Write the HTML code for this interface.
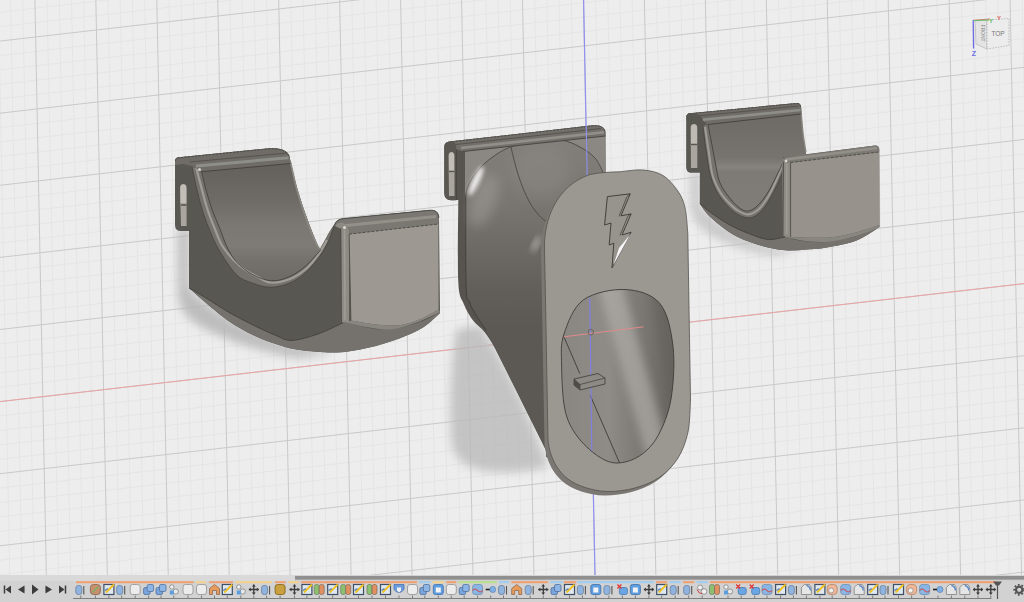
<!DOCTYPE html>
<html><head><meta charset="utf-8"><style>
html,body{margin:0;padding:0;background:#ededed;overflow:hidden;width:1024px;height:602px}
svg{display:block}
</style></head><body>
<svg width="1024" height="602" viewBox="0 0 1024 602">
<rect width="1024" height="602" fill="#ededed"/>
<path d="M-13.86 0L-1.88 602 M-1.67 0L10.31 602 M10.52 0L22.50 602 M22.71 0L34.69 602 M47.09 0L59.07 602 M59.28 0L71.26 602 M71.47 0L83.45 602 M83.66 0L95.64 602 M108.04 0L120.02 602 M120.23 0L132.21 602 M132.42 0L144.40 602 M144.61 0L156.59 602 M168.99 0L180.97 602 M181.18 0L193.16 602 M193.37 0L205.35 602 M205.56 0L217.54 602 M229.94 0L241.92 602 M242.13 0L254.11 602 M254.32 0L266.30 602 M266.51 0L278.49 602 M290.89 0L302.87 602 M303.08 0L315.06 602 M315.27 0L327.25 602 M327.46 0L339.44 602 M351.84 0L363.82 602 M364.03 0L376.01 602 M376.22 0L388.20 602 M388.41 0L400.39 602 M412.79 0L424.77 602 M424.98 0L436.96 602 M437.17 0L449.15 602 M449.36 0L461.34 602 M473.74 0L485.72 602 M485.93 0L497.91 602 M498.12 0L510.10 602 M510.31 0L522.29 602 M534.69 0L546.67 602 M546.88 0L558.86 602 M559.07 0L571.05 602 M571.26 0L583.24 602 M595.64 0L607.62 602 M607.83 0L619.81 602 M620.02 0L632.00 602 M632.21 0L644.19 602 M656.59 0L668.57 602 M668.78 0L680.76 602 M680.97 0L692.95 602 M693.16 0L705.14 602 M717.54 0L729.52 602 M729.73 0L741.71 602 M741.92 0L753.90 602 M754.11 0L766.09 602 M778.49 0L790.47 602 M790.68 0L802.66 602 M802.87 0L814.85 602 M815.06 0L827.04 602 M839.44 0L851.42 602 M851.63 0L863.61 602 M863.82 0L875.80 602 M876.01 0L887.99 602 M900.39 0L912.37 602 M912.58 0L924.56 602 M924.77 0L936.75 602 M936.96 0L948.94 602 M961.34 0L973.32 602 M973.53 0L985.51 602 M985.72 0L997.70 602 M997.91 0L1009.89 602 M1022.29 0L1034.27 602 M0 718.84L1024 600.88 M0 704.42L1024 586.46 M0 675.58L1024 557.62 M0 661.16L1024 543.20 M0 646.74L1024 528.78 M0 632.32L1024 514.36 M0 603.48L1024 485.52 M0 589.06L1024 471.10 M0 574.64L1024 456.68 M0 560.22L1024 442.26 M0 531.38L1024 413.42 M0 516.96L1024 399.00 M0 502.54L1024 384.58 M0 488.12L1024 370.16 M0 459.28L1024 341.32 M0 444.86L1024 326.90 M0 430.44L1024 312.48 M0 416.02L1024 298.06 M0 387.18L1024 269.22 M0 372.76L1024 254.80 M0 358.34L1024 240.38 M0 343.92L1024 225.96 M0 315.08L1024 197.12 M0 300.66L1024 182.70 M0 286.24L1024 168.28 M0 271.82L1024 153.86 M0 242.98L1024 125.02 M0 228.56L1024 110.60 M0 214.14L1024 96.18 M0 199.72L1024 81.76 M0 170.88L1024 52.92 M0 156.46L1024 38.50 M0 142.04L1024 24.08 M0 127.62L1024 9.66 M0 98.78L1024 -19.18 M0 84.36L1024 -33.60 M0 69.94L1024 -48.02 M0 55.52L1024 -62.44 M0 26.68L1024 -91.28 M0 12.26L1024 -105.70 M0 -2.16L1024 -120.12" stroke="#e5e5e5" stroke-width="1" fill="none"/>
<path d="M34.90 0L46.88 602 M95.85 0L107.83 602 M156.80 0L168.78 602 M217.75 0L229.73 602 M278.70 0L290.68 602 M339.65 0L351.63 602 M400.60 0L412.58 602 M461.55 0L473.53 602 M522.50 0L534.48 602 M583.45 0L595.43 602 M644.40 0L656.38 602 M705.35 0L717.33 602 M766.30 0L778.28 602 M827.25 0L839.23 602 M888.20 0L900.18 602 M949.15 0L961.13 602 M1010.10 0L1022.08 602 M0 690.00L1024 572.04 M0 617.90L1024 499.94 M0 545.80L1024 427.84 M0 473.70L1024 355.74 M0 401.60L1024 283.64 M0 329.50L1024 211.54 M0 257.40L1024 139.44 M0 185.30L1024 67.34 M0 113.20L1024 -4.76 M0 41.10L1024 -76.86" stroke="#c9c9c9" stroke-width="1" fill="none"/>
<path d="M0 401.6L1024 283.6" stroke="#eaa3a3" stroke-width="1" fill="none"/>
<path d="M583.6 0L595 575" stroke="#8f8ff0" stroke-width="1.2" fill="none"/>
<defs>
<filter id="blur5" x="-50%" y="-50%" width="200%" height="200%"><feGaussianBlur stdDeviation="5"/></filter>
<filter id="blur6" x="-50%" y="-50%" width="200%" height="200%"><feGaussianBlur stdDeviation="6"/></filter>
<filter id="blur8" x="-50%" y="-50%" width="200%" height="200%"><feGaussianBlur stdDeviation="8"/></filter>
<filter id="blur2" x="-50%" y="-50%" width="200%" height="200%"><feGaussianBlur stdDeviation="2"/></filter>
<filter id="blur3" x="-50%" y="-50%" width="200%" height="200%"><feGaussianBlur stdDeviation="3"/></filter>
<filter id="blur4" x="-50%" y="-50%" width="200%" height="200%"><feGaussianBlur stdDeviation="4"/></filter>
<linearGradient id="Mbody" x1="0" y1="140" x2="0" y2="470" gradientUnits="userSpaceOnUse">
<stop offset="0" stop-color="#827f7a"/><stop offset="0.18" stop-color="#7a7772"/><stop offset="0.33" stop-color="#6d6a65"/><stop offset="0.45" stop-color="#625f5a"/><stop offset="0.57" stop-color="#5c5954"/><stop offset="1" stop-color="#5c5954"/>
</linearGradient>
<linearGradient id="Mbowl" x1="470" y1="170" x2="560" y2="260" gradientUnits="userSpaceOnUse">
<stop offset="0" stop-color="#8a8782"/><stop offset="0.5" stop-color="#7a7772"/><stop offset="1" stop-color="#6e6b66"/>
</linearGradient>
<linearGradient id="Mhole" x1="565" y1="300" x2="672" y2="300" gradientUnits="userSpaceOnUse">
<stop offset="0" stop-color="#8a8783"/><stop offset="0.4" stop-color="#8f8c87"/><stop offset="0.7" stop-color="#7c7975"/><stop offset="1" stop-color="#6b6864"/>
</linearGradient>
<linearGradient id="Rinner" x1="0" y1="122" x2="0" y2="212" gradientUnits="userSpaceOnUse">
<stop offset="0" stop-color="#6f6c67"/><stop offset="0.4" stop-color="#777470"/><stop offset="0.5" stop-color="#86837e"/><stop offset="0.56" stop-color="#7d7a75"/><stop offset="1" stop-color="#817e79"/>
</linearGradient>
<linearGradient id="Linner" x1="0" y1="165" x2="0" y2="285" gradientUnits="userSpaceOnUse">
<stop offset="0" stop-color="#64615c"/><stop offset="0.29" stop-color="#6e6b66"/><stop offset="0.5" stop-color="#7b7873"/><stop offset="0.67" stop-color="#7e7b76"/><stop offset="0.79" stop-color="#75726d"/><stop offset="1" stop-color="#6c6964"/>
</linearGradient>
</defs>
<g id="L">
<path d="M178 228 L189 228 L189 288 C200 300 230 322 276 340 C300 348 320 350 337 352 L300 358 C260 352 225 340 200 326 C186 318 179 308 178 295 Z" fill="#b5b5b5" filter="url(#blur5)" opacity="0.85"/>
<path d="M175 225 L175 161 Q175 157.5 179 157.3 L267 148.5 C280 147.5 287 150 289.5 156 C289.8 157.2 289.6 157.3 291 163 C292.4 168.7 295 180.8 297.7 190 C300.4 199.2 303.9 209.5 307 218 C310.1 226.5 313.8 235.8 316 241 C318.2 246.2 319.3 247.7 320 249 C320.8 247.5 323.3 243 325 240 C326.7 237 328.5 233.5 330 231 C331.5 228.5 333.3 226 334 225 C336 220.5 339 218.6 345 218.3 L430 210.1 C435 209.7 439 212 439 218 L440 313 C437.2 315.4 429.8 323.3 423 327.5 C416.2 331.7 408.6 335 399.4 338.4 C390.2 341.8 378.4 345.4 368 347.8 C357.6 350.2 348.3 352.1 337 352.5 C325.7 352.9 310.2 351.4 300 350 C289.8 348.6 283.8 346.5 276 344 C268.2 341.5 260.7 338.7 253 335 C245.3 331.3 237.8 327.3 230 322 C222.2 316.7 212.8 308.7 206 303 C199.2 297.3 191.8 290.5 189 288 L189 231 L181 231 Q175 231 175 225 Z" fill="#595752"/>
<path d="M189 288 C191.8 289.7 199.2 293.8 206 298 C212.8 302.2 222.2 308.5 230 313 C237.8 317.5 245.3 321.2 253 325 C260.7 328.8 269.5 332.9 276 335.5 C282.5 338.1 285 340.8 292 340.5 C299 340.2 309.5 336.9 318 334 C326.5 331.1 338.8 324.7 343 322.8 C343.5 322.8 339.2 321.6 346 322.8 C352.8 324 371.5 329.9 383.8 329.8 C396.1 329.7 410.6 325 420 322 C429.4 319 436.7 313.7 440 312 L440 313 C437.2 315.4 429.8 323.3 423 327.5 C416.2 331.7 408.6 335 399.4 338.4 C390.2 341.8 378.4 345.4 368 347.8 C357.6 350.2 348.3 352.1 337 352.5 C325.7 352.9 310.2 351.4 300 350 C289.8 348.6 283.8 346.5 276 344 C268.2 341.5 260.7 338.7 253 335 C245.3 331.3 237.8 327.3 230 322 C222.2 316.7 212.8 308.7 206 303 C199.2 297.3 191.8 290.5 189 288 Z" fill="#75726d"/>
<path d="M189 288 C191.8 289.7 199.2 293.8 206 298 C212.8 302.2 222.2 308.5 230 313 C237.8 317.5 245.3 321.2 253 325 C260.7 328.8 269.5 332.9 276 335.5 C282.5 338.1 285 340.8 292 340.5 C299 340.2 309.5 336.9 318 334 C326.5 331.1 338.8 324.7 343 322.8" fill="none" stroke="#3f3d3a" stroke-width="0.8"/>
<path d="M199 168 L290 160 C291.3 165 294.9 180.3 297.7 190 C300.5 199.7 303.9 209.5 307 218 C310.1 226.5 313.8 235.7 316 241 C318.2 246.3 319.3 248.5 320 250 L321 249.7 C318.5 252.4 311.1 261.3 305.9 265.8 C300.7 270.3 295.5 274 289.8 276.5 C284.1 279 277.9 281.2 271.6 280.8 C265.3 280.4 258.1 277.6 252.2 274.4 C246.3 271.2 240.3 266.1 236.1 261.5 C231.9 256.9 229.7 252.5 226.9 246.8 C224.1 241.1 221.9 233.6 219.4 227.4 C216.9 221.2 214.2 215.6 212 209.4 C209.8 203.2 207.8 196.2 206 190 C204.2 183.8 202.7 175.7 201.5 172 C200.3 168.3 199.4 168.7 199 168 Z" fill="url(#Linner)"/>
<path d="M192 167 C192.8 170.8 195.2 182.4 197 190 C198.8 197.6 200.8 205.4 203 212.4 C205.2 219.4 207.7 225.6 210.4 231.9 C213.1 238.2 214.7 242.9 219 250 C223.3 257.1 230.6 268.9 236.1 274.4 C241.6 279.9 246.5 280.9 252.2 283 C257.9 285.1 264.2 287.3 270.5 287.3 C276.8 287.3 283.9 285.5 289.8 283 C295.7 280.5 300.9 276.7 305.9 272.2 C310.9 267.7 316.1 261.4 320 256 C323.9 250.6 326.7 245 329 240 C331.3 235 333.2 228.3 334 226 L334 225 C333.3 226 331.5 228.5 330 231 C328.5 233.5 326.7 237 325 240 C323.3 243 320.8 247.5 320 249 L321 249.7 C318.5 252.4 311.1 261.3 305.9 265.8 C300.7 270.3 295.5 274 289.8 276.5 C284.1 279 277.9 281.2 271.6 280.8 C265.3 280.4 258.1 277.6 252.2 274.4 C246.3 271.2 240.3 266.1 236.1 261.5 C231.9 256.9 229.7 252.5 226.9 246.8 C224.1 241.1 221.9 233.6 219.4 227.4 C216.9 221.2 214.2 215.6 212 209.4 C209.8 203.2 207.8 196.2 206 190 C204.2 183.8 202.7 175.7 201.5 172 C200.3 168.3 199.4 168.7 199 168 Z" fill="#75726d"/>
<path d="M196 167 C196.8 170.2 199.2 179.2 201 186 C202.8 192.8 204.8 201 207 208 C209.2 215 211.8 221.5 214.5 228 C217.2 234.5 218.8 240.7 223 247 C227.2 253.3 234.2 261 240 266 C245.8 271 252.8 274.2 258 277 C263.2 279.8 265.7 282.2 271 282.5 C276.3 282.8 284 281.4 290 279 C296 276.6 302 272.5 307 268 C312 263.5 316.7 256.7 320 252 C323.3 247.3 325.8 242 327 240" fill="none" stroke="#a09d97" stroke-width="2.2"/>
<path d="M199 168 C199.4 168.7 200.3 168.3 201.5 172 C202.7 175.7 204.2 183.8 206 190 C207.8 196.2 209.8 203.2 212 209.4 C214.2 215.6 216.9 221.2 219.4 227.4 C221.9 233.6 224.1 241.1 226.9 246.8 C229.7 252.5 231.9 256.9 236.1 261.5 C240.3 266.1 246.3 271.2 252.2 274.4 C258.1 277.6 265.3 280.4 271.6 280.8 C277.9 281.2 284.1 279 289.8 276.5 C295.5 274 300.7 270.3 305.9 265.8 C311.1 261.3 318.5 252.4 321 249.7" fill="none" stroke="#45433f" stroke-width="0.9"/>
<path d="M192 167 C192.8 170.8 195.2 182.4 197 190 C198.8 197.6 200.8 205.4 203 212.4 C205.2 219.4 207.7 225.6 210.4 231.9 C213.1 238.2 214.7 242.9 219 250 C223.3 257.1 230.6 268.9 236.1 274.4 C241.6 279.9 246.5 280.9 252.2 283 C257.9 285.1 264.2 287.3 270.5 287.3 C276.8 287.3 283.9 285.5 289.8 283 C295.7 280.5 300.9 276.7 305.9 272.2 C310.9 267.7 316.1 261.4 320 256 C323.9 250.6 326.7 245 329 240 C331.3 235 333.2 228.3 334 226" fill="none" stroke="#45433f" stroke-width="0.8"/>
<path d="M290.5 162 C291.6 166.7 294.4 180.7 297 190 C299.6 199.3 303 209.5 306 218 C309 226.5 312.8 235.8 315 241 C317.2 246.2 318.8 247.7 319.5 249" fill="none" stroke="#8c8983" stroke-width="1.6"/>
<path d="M175 165 L175 161 Q175 157.5 179 157.3 L267 148.5 C280 147.5 287 150 289.5 156 L290.5 163.5 L201.7 171.7 L192 166 L183 164 Z" fill="#6f6c67"/>
<path d="M190 162 L287 153" stroke="#4f4d49" stroke-width="0.8" fill="none"/>
<path d="M196 166 L288.5 157.8" stroke="#8e8e88" stroke-width="3" fill="none"/>
<path d="M175.5 161 Q175.5 158 179 157.8 L267 149 C280 148 286.5 150.5 289 156" stroke="#4a4844" stroke-width="0.9" fill="none" stroke-dasharray="2.5 1"/>
<path d="M201.7 171.7 L290.5 163.5" stroke="#43413d" stroke-width="0.9" fill="none"/>
<circle cx="199.5" cy="169.5" r="1.6" fill="#e8e6e2" opacity="0.8"/>
<path d="M180 188 Q180 184 183.3 184 Q186.6 184 186.6 188 L186.6 226 L181 226 Z" fill="#aaa69f"/>
<path d="M180.5 188 Q180.5 184.5 183.3 184.5 Q186.2 184.5 186.2 188 L186.2 203 L180.5 203 Z" fill="#c2beb7"/>
<path d="M181 205 L186.6 205" stroke="#55524d" stroke-width="1.5"/>
<path d="M334 225 C336 220.5 339 218.6 345 218.3 L430 210.1 C435 209.7 439 212 439 218 L438.4 224 L349.1 234.1 L341 229 Z" fill="#7b7873"/>
<path d="M341 226 L436 216.5" stroke="#939089" stroke-width="3" fill="none"/>
<path d="M334.5 225.5 C336.5 220.5 339.5 218.8 345 218.5 L430 210.3 C435 209.9 438.7 212 438.8 218" stroke="#4a4844" stroke-width="0.9" fill="none"/>
<path d="M335 226 C337 223 340 222 343 223 C347 225 349 229 349.1 234.1 L349 323 L341.5 322 L341 229 Z" fill="#8e8a84"/>
<path d="M344.5 230 L345 320" stroke="#a09d97" stroke-width="1.5" fill="none"/>
<circle cx="344.5" cy="227.5" r="1.5" fill="#f0eeea" opacity="0.8"/>
<path d="M349.1 234.1 L438.4 224 L438.6 309.5 C425 318 410 324 399.4 325.2 C380 326 365 323 350.9 320.5 Z" fill="#9d9992"/>
<path d="M350.9 320.5 C365 323 380 326 399.4 325.2 C410 324 425 318 438.6 309.5 L440 312 C420 322 400 330 383.8 329.8 C370 328 355 325 346 322.8 Z" fill="#898580"/>
<path d="M349.1 234.1 L438.4 224" stroke="#4a4844" stroke-width="0.9" stroke-dasharray="3 1.5" fill="none"/>
<path d="M340.8 228 L341.5 322 M349.1 234.1 L350.9 320.5" stroke="#4a4844" stroke-width="0.8" fill="none"/>
</g>
<g id="M">
<path d="M456 330 C450 370 449 420 452 445 C456 462 470 471 500 472 C520 472 540 470 548 466 L530 420 C515 385 500 355 480 325 Z" fill="#bababa" filter="url(#blur5)" opacity="0.8"/>
<path d="M444.3 193 L444.3 147 Q444.3 141.5 451.3 141.3 L593 125.3 Q605.5 124.5 605.5 133.3 L605.5 172 L560 200 L546 240 L546 445 L594 493.3  C590.8 492.4 580.7 490.9 575 488 C569.3 485.1 564.1 480.7 559.9 475.6 C555.7 470.5 553.1 464.1 549.6 457.4 C546.1 450.7 542.4 442.7 538.7 435.4 C535.1 428.1 531.4 420.8 527.7 413.5 C524.1 406.2 520.4 398.9 516.8 391.6 C513.1 384.3 509.5 376.9 505.8 369.6 C502.1 362.3 498.5 354.1 494.8 347.7 C491.1 341.3 487.5 335.9 483.9 331.3 C480.2 326.7 476.2 324.9 472.9 320.3 C469.5 315.7 466.2 310.3 463.8 303.9 C461.4 297.5 459.2 299.3 458.3 282 C457.4 264.7 458.3 213.7 458.3 200 L451 200.2 Q444.3 200.2 444.3 193 Z" fill="#575450"/>
<path d="M605 134 L605.5 176 L560 200 L546 240 L546 457 L549.6 457.4 C547.8 453.7 542.4 442.7 538.7 435.4 C535.1 428.1 531.4 420.8 527.7 413.5 C524.1 406.2 520.4 398.9 516.8 391.6 C513.1 384.3 509.5 376.9 505.8 369.6 C502.1 362.3 498.1 354.3 494.8 347.7 C491.5 341.1 489.1 335.4 486 330 C482.9 324.6 478.8 319.7 476 315 C473.2 310.3 471.2 307.5 469.5 302 C467.8 296.5 466.6 307.3 466 282 C465.4 256.7 466 172 466 150 Z" fill="url(#Mbody)"/>
<path d="M466 150 C466 172 465.4 256.7 466 282 C466.6 307.3 467.8 296.5 469.5 302 C471.2 307.5 473.2 310.3 476 315 C478.8 319.7 484.3 327.5 486 330" fill="none" stroke="#42403c" stroke-width="1"/>
<path d="M465 151 L605 135.5 L605.5 176 L603 172.3 C601.7 169.9 598.8 162.2 595 158 C591.2 153.8 585.6 150 580 147 C574.4 144 568.2 141.1 561.5 140 C554.8 138.9 548.6 139.3 540 140.5 C531.4 141.7 518.1 144.2 509.8 147.3 C501.5 150.4 495.5 154.9 490 159 C484.5 163.1 480.3 167.5 476.6 172 C472.9 176.5 469.9 181.5 468 186 C466.1 190.5 465.5 196.8 465 199 Z" fill="#8b8782"/>
<path d="M465 199 C465.5 196.8 466.1 190.5 468 186 C469.9 181.5 472.9 176.5 476.6 172 C480.3 167.5 484.5 163.1 490 159 C495.5 154.9 501.5 150.4 509.8 147.3 C518.1 144.2 531.4 141.7 540 140.5 C548.6 139.3 554.8 138.9 561.5 140 C568.2 141.1 574.4 144 580 147 C585.6 150 591.2 153.8 595 158 C598.8 162.2 601.7 169.9 603 172.3" fill="none" stroke="#4a4844" stroke-width="0.9"/>
<ellipse cx="540" cy="170" rx="30" ry="26" fill="#8c8984" opacity="0.55" filter="url(#blur8)"/>
<ellipse cx="476" cy="181" rx="3.5" ry="16" transform="rotate(25 476 181)" fill="#ffffff" opacity="0.95" filter="url(#blur2)"/>
<ellipse cx="484" cy="200" rx="12" ry="28" transform="rotate(20 484 200)" fill="#a8a5a0" opacity="0.45" filter="url(#blur6)"/>
<ellipse cx="536" cy="244" rx="2.5" ry="9" transform="rotate(25 536 244)" fill="#dedcd8" opacity="0.6" filter="url(#blur3)"/>
<path d="M511 147 C515 165 520 185 530 203 C536 213 542 219 547 222" fill="none" stroke="#4a4844" stroke-width="0.9"/>
<path d="M444.3 150 L444.3 147 Q444.3 141.5 451.3 141.3 L593 125.3 Q605.5 124.5 605.5 133.3 L605.5 136 L463 151.5 L456 149 Z" fill="#726f6a"/>
<path d="M456 144.5 L601 128.5" stroke="#4f4d49" stroke-width="0.8" fill="none"/>
<path d="M461 148 L604 132.3" stroke="#928f89" stroke-width="2.6" fill="none"/>
<path d="M452 141.8 L593 125.8 Q605 125 605 133" stroke="#4a4844" stroke-width="0.9" fill="none" stroke-dasharray="2.5 1"/>
<path d="M463 151.5 L605.5 136" stroke="#45433f" stroke-width="0.9" fill="none"/>
<path d="M444.3 193 L444.3 147 Q444.3 141.5 451.3 141.3 Q456 141.5 456.3 147 L456.3 200.2 L451 200.2 Q444.3 200.2 444.3 193 Z" fill="#5a5752"/>
<path d="M448.5 156 Q448.5 152 451.5 152 Q454.5 152 454.5 156 L454.5 196 L449 196 Z" fill="#aaa69f"/>
<path d="M449 156 Q449 152.5 451.5 152.5 Q454 152.5 454 156 L454 170.5 L449 170.5 Z" fill="#c2beb7"/>
<path d="M449 171.5 L454.5 171.5" stroke="#5a5752" stroke-width="1.4"/>
<path d="M456.3 150 L456.3 200" stroke="#46443f" stroke-width="1"/>
<path d="M586.2 125.5 L587.2 176" stroke="#8f8ff0" stroke-width="1.1"/>
<path d="M544.5 250 C543.5 220 556 186 590 174.5 C600 172.5 610 172 620 171.8 C623.8 171.5 635.8 169.4 643 170 C650.2 170.6 657.2 172 663 175.5 C668.8 179 674.1 185.7 677.8 191 C681.5 196.3 683.3 200.5 685 207.5 C686.7 214.5 687.3 228.8 687.8 233 L690.5 400 C690.1 405.3 690.1 422.3 688 432 C685.9 441.7 682.7 450.5 678 458 C673.3 465.5 667.2 472 660 477 C652.8 482 643.7 485.6 635 488 C626.3 490.4 616.3 491.6 608 491.5 C599.7 491.4 591.7 489.6 585 487.5 C578.3 485.4 572.7 482.4 568 479 C563.3 475.6 559.9 471.3 557 467 C554.1 462.7 552 457.5 550.5 453 C549 448.5 548.4 442.2 548 440 L545.5 300 Z" fill="#7b7772" transform="translate(-3.5 4)"/>
<path d="M544.5 250 C543.5 220 556 186 590 174.5 C600 172.5 610 172 620 171.8 C623.8 171.5 635.8 169.4 643 170 C650.2 170.6 657.2 172 663 175.5 C668.8 179 674.1 185.7 677.8 191 C681.5 196.3 683.3 200.5 685 207.5 C686.7 214.5 687.3 228.8 687.8 233 L690.5 400 C690.1 405.3 690.1 422.3 688 432 C685.9 441.7 682.7 450.5 678 458 C673.3 465.5 667.2 472 660 477 C652.8 482 643.7 485.6 635 488 C626.3 490.4 616.3 491.6 608 491.5 C599.7 491.4 591.7 489.6 585 487.5 C578.3 485.4 572.7 482.4 568 479 C563.3 475.6 559.9 471.3 557 467 C554.1 462.7 552 457.5 550.5 453 C549 448.5 548.4 442.2 548 440 L545.5 300 Z" fill="#9b9791"/>
<path d="M544.5 250 C543.5 220 556 186 590 174.5 C600 172.5 610 172 620 171.8 C623.8 171.5 635.8 169.4 643 170 C650.2 170.6 657.2 172 663 175.5 C668.8 179 674.1 185.7 677.8 191 C681.5 196.3 683.3 200.5 685 207.5 C686.7 214.5 687.3 228.8 687.8 233 L690.5 400 C690.1 405.3 690.1 422.3 688 432 C685.9 441.7 682.7 450.5 678 458 C673.3 465.5 667.2 472 660 477 C652.8 482 643.7 485.6 635 488 C626.3 490.4 616.3 491.6 608 491.5 C599.7 491.4 591.7 489.6 585 487.5 C578.3 485.4 572.7 482.4 568 479 C563.3 475.6 559.9 471.3 557 467 C554.1 462.7 552 457.5 550.5 453 C549 448.5 548.4 442.2 548 440 L545.5 300 Z" fill="none" stroke="#55534f" stroke-width="0.8"/>
<path d="M625 289.5 C637.7 290.1 651.7 293.8 659.7 303.3 C667.7 312.8 671.1 330.4 673 346.4 C674.9 362.3 673.5 384.1 671 399 C668.5 413.9 663.2 426.2 658 435.7 C652.8 445.2 646.5 451.2 639.7 455.8 C632.9 460.4 624 463 617 463 C610 463 604.3 460.3 597.6 455.8 C590.9 451.3 582.4 443.6 577 436 C571.6 428.4 567.6 421.8 565 410 C562.4 398.2 561.8 377.7 561.6 365 C561.4 352.3 560.4 344.8 564 334 C567.6 323.2 573.1 307.4 583.3 300 C593.5 292.6 612.3 288.9 625 289.5 Z" fill="url(#Mhole)"/>
<clipPath id="holeclip"><path d="M625 289.5 C637.7 290.1 651.7 293.8 659.7 303.3 C667.7 312.8 671.1 330.4 673 346.4 C674.9 362.3 673.5 384.1 671 399 C668.5 413.9 663.2 426.2 658 435.7 C652.8 445.2 646.5 451.2 639.7 455.8 C632.9 460.4 624 463 617 463 C610 463 604.3 460.3 597.6 455.8 C590.9 451.3 582.4 443.6 577 436 C571.6 428.4 567.6 421.8 565 410 C562.4 398.2 561.8 377.7 561.6 365 C561.4 352.3 560.4 344.8 564 334 C567.6 323.2 573.1 307.4 583.3 300 C593.5 292.6 612.3 288.9 625 289.5 Z"/></clipPath>
<g clip-path="url(#holeclip)">
<path d="M598 285 L622 285 L668 450 L648 462 Z" fill="#b3b0ab" opacity="0.65" filter="url(#blur4)"/>
<path d="M650 280 L690 280 L690 470 L675 470 Z" fill="#5e5b57" opacity="0.4" filter="url(#blur4)"/>
<path d="M563.9 336.8 L579.8 373.6 M590.3 395.5 L619.6 463" stroke="#3e3c39" stroke-width="0.9" fill="none"/>
<path d="M589.8 298 L592 470" stroke="#8080e8" stroke-width="1.1"/>
<path d="M563.9 336.8 L643.6 326.8" stroke="#e08a8a" stroke-width="1"/>
<circle cx="590.8" cy="332.2" r="2.8" fill="none" stroke="#6a6763" stroke-width="1"/>
<path d="M574 379 L598 373.5 L605 378 L605 384 L580 390 L574 385 Z" fill="#8d8a85" stroke="#3e3c39" stroke-width="0.8"/>
<path d="M574 379 L580 384.5 L605 378 M580 384.5 L580 390" stroke="#3e3c39" stroke-width="0.7" fill="none"/>
<path d="M574 379 L580 384.5 L580 390 L574 385 Z" fill="#4e4c48"/>
</g>
<path d="M625 289.5 C637.7 290.1 651.7 293.8 659.7 303.3 C667.7 312.8 671.1 330.4 673 346.4 C674.9 362.3 673.5 384.1 671 399 C668.5 413.9 663.2 426.2 658 435.7 C652.8 445.2 646.5 451.2 639.7 455.8 C632.9 460.4 624 463 617 463 C610 463 604.3 460.3 597.6 455.8 C590.9 451.3 582.4 443.6 577 436 C571.6 428.4 567.6 421.8 565 410 C562.4 398.2 561.8 377.7 561.6 365 C561.4 352.3 560.4 344.8 564 334 C567.6 323.2 573.1 307.4 583.3 300 C593.5 292.6 612.3 288.9 625 289.5 Z" fill="none" stroke="#3e3c39" stroke-width="0.9"/>
<path d="M607.4 196.6 L630.2 193.8 L621 215.8 L631.1 213.9 L622 235 L631.1 232.2 L612 267.9 L613.8 243.2 L609.2 245 L611 223 L604.6 225 Z" fill="#97938d" stroke="#3a3835" stroke-width="0.9" stroke-linejoin="round"/>
<path d="M630.2 193.8 L627 196.5 L619 216.5 M631.1 213.9 L628 216 L620 235.5" stroke="#3a3835" stroke-width="0.7" fill="none"/>
<path d="M630.5 234 L613.5 265 L619 248 Z" fill="#f6f6f6"/>
</g>
<g id="R">
<path d="M690 172 L700 172 L700 204 C710 216 730 232 768 246 C780 249 790 250 800 250 L775 256 C745 252 720 242 703 230 C694 222 690 212 690 200 Z" fill="#c2c2c2" filter="url(#blur4)" opacity="0.8"/>
<path d="M686.4 167 L686.4 117 Q686.4 113.3 690 113.2 L796.9 103 Q801 102.8 801.2 108.3 C801.5 112.7 802.4 127.6 803.2 134.9 C804 142.2 805.5 149.2 805.9 152.1 L806 154.3 L875 145.5 Q879 145.3 879.3 149.5 L879.5 227 C875.6 229.3 864.8 237.3 856 240.7 C847.2 244.1 834.9 246 826.7 247.5 C818.5 249 813.5 249 807 249.5 C800.5 250 794.2 250.7 787.7 250.4 C781.2 250.1 774.5 249 768 247.5 C761.5 246 755.1 244.2 748.6 241.6 C742.1 239 735.5 236.1 729 231.9 C722.5 227.7 714.4 221 709.5 216.3 C704.6 211.6 701.4 205.7 699.8 203.6 L699.8 172.4 L690 172.4 Q686.4 172.4 686.4 167 Z" fill="#595752"/>
<path d="M699.8 203.6 C701.5 205 705.1 208.5 710 212 C714.9 215.5 722.6 220.9 729 224.5 C735.4 228.1 742.1 231 748.6 233.5 C755.1 236 761.8 238.9 768 239.5 C774.2 240.1 782.8 237.2 785.7 236.8 C788.1 237.5 793.2 239.9 800 240.8 C806.8 241.7 817.4 242.8 826.7 242 C836 241.2 847.2 238.7 856 236 C864.8 233.3 875.6 227.7 879.5 226 L879.5 227 C875.6 229.3 864.8 237.3 856 240.7 C847.2 244.1 834.9 246 826.7 247.5 C818.5 249 813.5 249 807 249.5 C800.5 250 794.2 250.7 787.7 250.4 C781.2 250.1 774.5 249 768 247.5 C761.5 246 755.1 244.2 748.6 241.6 C742.1 239 735.5 236.1 729 231.9 C722.5 227.7 714.4 221 709.5 216.3 C704.6 211.6 701.4 205.7 699.8 203.6 Z" fill="#75726d"/>
<path d="M699.8 203.6 C701.5 205 705.1 208.5 710 212 C714.9 215.5 722.6 220.9 729 224.5 C735.4 228.1 742.1 231 748.6 233.5 C755.1 236 761.8 238.9 768 239.5 C774.2 240.1 782.8 237.2 785.7 236.8" fill="none" stroke="#3f3d3a" stroke-width="0.8"/>
<path d="M708 124 L801.2 113.5 C801.5 117.1 802.4 128.5 803.2 134.9 C804 141.3 805.4 148.6 805.9 152.1 C806.4 155.6 806 155.3 806 156 L784 157 C783.6 158.4 782.5 162.9 781.5 165.6 C780.5 168.3 779.2 170.6 778 173 C776.8 175.4 776 177.1 774.5 180 C773 182.9 770.9 187.2 769 190.5 C767.1 193.8 765.2 196.8 763 199.5 C760.8 202.2 758.4 205.1 756 207 C753.6 208.9 751 210.7 748.5 211 C746 211.3 743.9 210.9 741 209 C738.1 207.1 734.5 203.8 731 199.5 C727.5 195.2 722.7 189.4 720 183 C717.3 176.6 716.5 168.2 715 161 C713.5 153.8 712.2 146.2 711 140 C709.8 133.8 708.5 126.7 708 124 Z" fill="url(#Rinner)"/>
<path d="M703 126 C703.5 130 704.8 142 706 150 C707.2 158 708.2 167 710 174 C711.8 181 714.2 186.8 717 192 C719.8 197.2 723.7 201.8 727 205.5 C730.3 209.2 733.5 211.9 737 214 C740.5 216.1 744.7 217.8 748 218 C751.3 218.2 754.2 216.9 757 215 C759.8 213.1 762.5 209.8 765 206.5 C767.5 203.2 769.8 198.9 772 195 C774.2 191.1 776.2 186.8 778 183 C779.8 179.2 781.5 175.2 782.5 172 C783.5 168.8 783.8 165.3 784 164 L784 157 C783.6 158.4 782.5 162.9 781.5 165.6 C780.5 168.3 779.2 170.6 778 173 C776.8 175.4 776 177.1 774.5 180 C773 182.9 770.9 187.2 769 190.5 C767.1 193.8 765.2 196.8 763 199.5 C760.8 202.2 758.4 205.1 756 207 C753.6 208.9 751 210.7 748.5 211 C746 211.3 743.9 210.9 741 209 C738.1 207.1 734.5 203.8 731 199.5 C727.5 195.2 722.7 189.4 720 183 C717.3 176.6 716.5 168.2 715 161 C713.5 153.8 712.2 146.2 711 140 C709.8 133.8 708.5 126.7 708 124 Z" fill="#75726d"/>
<path d="M705 127 C705.6 130.8 707.2 142 708.5 150 C709.8 158 710.7 168.2 712.5 175 C714.3 181.8 716.8 186.3 719.5 191 C722.2 195.7 725.8 199.7 729 203 C732.2 206.3 735.3 209.1 738.5 211 C741.7 212.9 745 214.5 748 214.5 C751 214.5 753.8 212.9 756.5 211 C759.2 209.1 761.7 206.1 764 203 C766.3 199.9 768.5 196.2 770.5 192.5 C772.5 188.8 774.3 184.8 776 181 C777.7 177.2 779.3 173.2 780.5 170 C781.7 166.8 782.6 163.3 783 162" fill="none" stroke="#a09d97" stroke-width="2"/>
<path d="M708 124 C708.5 126.7 709.8 133.8 711 140 C712.2 146.2 713.5 153.8 715 161 C716.5 168.2 717.3 176.6 720 183 C722.7 189.4 727.5 195.2 731 199.5 C734.5 203.8 738.1 207.1 741 209 C743.9 210.9 746 211.3 748.5 211 C751 210.7 753.6 208.9 756 207 C758.4 205.1 760.8 202.2 763 199.5 C765.2 196.8 767.1 193.8 769 190.5 C770.9 187.2 773 182.9 774.5 180 C776 177.1 776.8 175.4 778 173 C779.2 170.6 780.5 168.3 781.5 165.6 C782.5 162.9 783.6 158.4 784 157" fill="none" stroke="#45433f" stroke-width="0.9"/>
<path d="M703 126 C703.5 130 704.8 142 706 150 C707.2 158 708.2 167 710 174 C711.8 181 714.2 186.8 717 192 C719.8 197.2 723.7 201.8 727 205.5 C730.3 209.2 733.5 211.9 737 214 C740.5 216.1 744.7 217.8 748 218 C751.3 218.2 754.2 216.9 757 215 C759.8 213.1 762.5 209.8 765 206.5 C767.5 203.2 769.8 198.9 772 195 C774.2 191.1 776.2 186.8 778 183 C779.8 179.2 781.5 175.2 782.5 172 C783.5 168.8 783.8 165.3 784 164" fill="none" stroke="#45433f" stroke-width="0.8"/>
<path d="M686.4 120 L686.4 117 Q686.4 113.3 690 113.2 L796.9 103 Q801 102.8 801.2 108.3 L801.5 114 L708 124.5 L702 120 Z" fill="#6f6c67"/>
<path d="M698 116 L798.5 106" stroke="#4f4d49" stroke-width="0.8" fill="none"/>
<path d="M703 119.8 L800.5 110" stroke="#8e8e88" stroke-width="2.6" fill="none"/>
<path d="M687 117 Q687 113.8 690 113.7 L796.9 103.5 Q800.5 103.3 800.8 108" stroke="#4a4844" stroke-width="0.9" fill="none" stroke-dasharray="2.5 1"/>
<path d="M708 124.5 L801.5 114" stroke="#43413d" stroke-width="0.9" fill="none"/>
<path d="M801.2 113.5 C801.5 117.1 802.4 128.5 803.2 134.9 C804 141.3 805.5 149.2 805.9 152.1" fill="none" stroke="#8a8781" stroke-width="1.4"/>
<path d="M686.4 167 L686.4 117 Q686.4 113.3 690 113.2 Q702 113 702.6 120 L702.6 172.4 L690 172.4 Q686.4 172.4 686.4 167 Z" fill="#595752"/>
<path d="M690.6 128 Q690.6 124 694 124 Q697.3 124 697.3 128 L697.3 168 L691 168 Z" fill="#aaa69f"/>
<path d="M691 128 Q691 124.5 694 124.5 Q697 124.5 697 128 L697 143.5 L691 143.5 Z" fill="#bfbbb4"/>
<path d="M691 144.5 L697.3 144.5" stroke="#5a5752" stroke-width="1.4"/>
<path d="M782 160 C782 158 784 157.4 787 157 L875 145.5 Q879 145.3 879.3 149.5 L879 152 L790.6 162.5 L790.6 237 L785.7 236.8 L782.8 235 Z" fill="#7d7a75"/>
<path d="M786 159.5 L877 148" stroke="#939089" stroke-width="2.4" fill="none"/>
<path d="M783.5 162 L783 235 L786 237 L790.6 237 L790.6 162.5 Z" fill="#8e8a84"/>
<path d="M786.8 164 L786.8 234" stroke="#a09d97" stroke-width="1.4" fill="none"/>
<circle cx="786" cy="161" r="1.4" fill="#f0eeea" opacity="0.8"/>
<path d="M790.6 162.5 L879 152 L879.5 225 C860 232 840 237 826.7 237.7 C810 238 800 237.5 790.6 237 Z" fill="#97938c"/>
<path d="M790.6 237 C800 237.5 810 238 826.7 237.7 C840 237 860 232 879.5 225 L879.5 227 C860 236 840 241 826.7 242 C810 242 800 241 785.7 236.8 Z" fill="#898580"/>
<path d="M790.6 162.5 L879 152" stroke="#4a4844" stroke-width="0.9" stroke-dasharray="3 1.5" fill="none"/>
<path d="M783.5 162 L783 235 M790.6 162.5 L790.6 237" stroke="#4a4844" stroke-width="0.8" fill="none"/>
</g>
<g id="viewcube">
<path d="M975 21 L987 20 L987 49 L976 44 Z" fill="#e4e4e4" stroke="#b8b8b8" stroke-width="0.7"/>
<path d="M987 20 L1009 18.5 L1009 45.5 L987 49 Z" fill="#ececec" stroke="#a8a8a8" stroke-width="0.7" stroke-dasharray="1.6 1.2"/>
<text x="998" y="36" font-family="Liberation Sans, sans-serif" font-size="6.5" fill="#777" text-anchor="middle">TOP</text>
<text x="981" y="33" font-family="Liberation Sans, sans-serif" font-size="5" fill="#888" text-anchor="middle" transform="rotate(90 981 33)">FRONT</text>
<path d="M973.2 20.3 L990 19" stroke="#d87a7a" stroke-width="1.2"/>
<path d="M973.2 20.6 L989 20" stroke="#6cc06c" stroke-width="1"/>
<path d="M973.2 20.3 L973.6 48.5" stroke="#6a6ae6" stroke-width="1.3"/>
<text x="974" y="55.5" font-family="Liberation Sans, sans-serif" font-size="7" font-weight="bold" fill="#6a6ae6" text-anchor="middle">Z</text>
<text x="991" y="22.5" font-family="Liberation Sans, sans-serif" font-size="6" font-weight="bold" fill="#5cbf5c" text-anchor="middle">Y</text>
<text x="999" y="19.5" font-family="Liberation Sans, sans-serif" font-size="6" font-weight="bold" fill="#e05858" text-anchor="middle">Y</text>
</g>

<g id="toolbar">
<rect x="0" y="575" width="1024" height="27" fill="#d2d2d2"/>
<rect x="0" y="575" width="295" height="6" fill="#d9d9d9"/>
<rect x="295" y="576" width="729" height="3.8" fill="#8f8f8f"/>
<rect x="295" y="579.8" width="729" height="1.2" fill="#cfcfcf"/>
<rect x="76" y="581.2" width="117.6" height="2" fill="#f0a070"/>
<rect x="195.8" y="581.2" width="10.2" height="2" fill="#f3d28a"/>
<rect x="209.3" y="581.2" width="23.7" height="2" fill="#f0a070"/>
<rect x="235.2" y="581.2" width="37.0" height="2" fill="#f3d28a"/>
<rect x="275" y="581.2" width="10.7" height="2" fill="#f0a070"/>
<rect x="288.4" y="581.2" width="10.6" height="2" fill="#f3d28a"/>
<rect x="301.2" y="581.2" width="115.8" height="2" fill="#f0a070"/>
<rect x="419" y="581.2" width="11.4" height="2" fill="#9fcdf0"/>
<rect x="432.7" y="581.2" width="11.3" height="2" fill="#f3d28a"/>
<rect x="446.2" y="581.2" width="10.1" height="2" fill="#f0a070"/>
<rect x="458.5" y="581.2" width="38.2" height="2" fill="#b9e08a"/>
<rect x="499" y="581.2" width="10.0" height="2" fill="#9fcdf0"/>
<rect x="511.3" y="581.2" width="36.7" height="2" fill="#f0a070"/>
<rect x="550.4" y="581.2" width="12.4" height="2" fill="#9fcdf0"/>
<rect x="564" y="581.2" width="12.3" height="2" fill="#f0a070"/>
<rect x="577.4" y="581.2" width="76.4" height="2" fill="#9fcdf0"/>
<rect x="656" y="581.2" width="11.3" height="2" fill="#f0a070"/>
<rect x="669.6" y="581.2" width="11.2" height="2" fill="#9fcdf0"/>
<rect x="683" y="581.2" width="11.3" height="2" fill="#f0a070"/>
<rect x="696.5" y="581.2" width="11.3" height="2" fill="#9fcdf0"/>
<rect x="710" y="581.2" width="287.0" height="2" fill="#f0a070"/>
<path d="M4.5 585.5V593.5" stroke="#3c3c3c" stroke-width="1.5"/><path d="M11 585.5L5.5 589.5L11 593.5Z" fill="#3c3c3c"/>
<path d="M24.5 585.5L18 589.5L24.5 593.5Z" fill="#3c3c3c"/><path d="M24.5 587.5V591.5" stroke="#7a7a7a" stroke-width="1"/>
<path d="M32 584.5L38.5 589.5L32 594.5Z" fill="#3c3c3c"/>
<path d="M45.5 585.5L52 589.5L45.5 593.5Z" fill="#3c3c3c"/><path d="M45.5 587.5V591.5" stroke="#7a7a7a" stroke-width="1"/>
<path d="M59 585.5L64.5 589.5L59 593.5Z" fill="#3c3c3c"/><path d="M65.5 585.5V593.5" stroke="#3c3c3c" stroke-width="1.5"/>
<path d="M73 598.5H991.4" stroke="#7e7e7e" stroke-width="1"/>
<path d="M80.8 598V595.5 M95.4 598V595.5 M108.9 598V595.5 M121.7 598V595.5 M135.2 598V595.5 M148.6 598V595.5 M161.0 598V595.5 M173.8 598V595.5 M188.0 598V595.5 M201.5 598V595.5 M214.5 598V595.5 M227.3 598V595.5 M240.8 598V595.5 M253.8 598V595.5 M266.6 598V595.5 M280.1 598V595.5 M294.5 598V595.5 M306.9 598V595.5 M319.2 598V595.5 M332.7 598V595.5 M345.7 598V595.5 M358.5 598V595.5 M372.0 598V595.5 M385.5 598V595.5 M399.0 598V595.5 M412.5 598V595.5 M424.8 598V595.5 M438.3 598V595.5 M451.3 598V595.5 M464.2 598V595.5 M477.6 598V595.5 M490.7 598V595.5 M503.5 598V595.5 M516.7 598V595.5 M530.2 598V595.5 M543.3 598V595.5 M556.0 598V595.5 M569.5 598V595.5 M582.4 598V595.5 M595.8 598V595.5 M608.9 598V595.5 M622.4 598V595.5 M635.4 598V595.5 M648.9 598V595.5 M661.7 598V595.5 M675.2 598V595.5 M688.7 598V595.5 M702.1 598V595.5 M714.5 598V595.5 M728.0 598V595.5 M741.2 598V595.5 M754.7 598V595.5 M767.0 598V595.5 M780.6 598V595.5 M793.4 598V595.5 M806.4 598V595.5 M819.9 598V595.5 M832.2 598V595.5 M845.7 598V595.5 M859.2 598V595.5 M872.7 598V595.5 M885.0 598V595.5 M898.5 598V595.5 M911.6 598V595.5 M924.6 598V595.5 M938.0 598V595.5 M951.4 598V595.5 M964.8 598V595.5 M978.0 598V595.5 M990.8 598V595.5" stroke="#7e7e7e" stroke-width="1"/>
<rect x="75.8" y="585.5" width="6" height="9" rx="2.5" fill="#8fb4e0" stroke="#6d7f99" stroke-width="0.8"/><path d="M83.8 594.5V586.0" stroke="#555" stroke-width="1.1"/>
<rect x="90.4" y="584.5" width="10" height="10" rx="3" fill="#c8906a" stroke="#8a6a58" stroke-width="0.9"/><path d="M92.4 592.5L98.4 586.5" stroke="#7fae6a" stroke-width="1.6"/>
<rect x="103.9" y="584.5" width="10" height="10" fill="#dfe8f0" stroke="#3f4f66" stroke-width="1.2"/><path d="M105.9 592.5L113.9 584.5" stroke="#f0c020" stroke-width="1.8"/><path d="M104.9 590.5L107.9 588.5" stroke="#5a7fb0" stroke-width="1.5"/>
<rect x="116.7" y="585.5" width="6" height="9" rx="2.5" fill="#8fb4e0" stroke="#6d7f99" stroke-width="0.8"/><path d="M124.7 594.5V586.0" stroke="#555" stroke-width="1.1"/>
<rect x="130.2" y="584.5" width="10" height="10" rx="2.5" fill="#ececec" stroke="#9a9a9a" stroke-width="0.9"/>
<rect x="143.6" y="587.5" width="6.5" height="7" rx="1.5" fill="#7aa5dc" stroke="#50709c" stroke-width="0.8"/><rect x="147.1" y="584.5" width="6.5" height="7" rx="1.5" fill="#8db5e6" stroke="#50709c" stroke-width="0.8"/>
<rect x="156.0" y="587.5" width="6.5" height="7" rx="1.5" fill="#7aa5dc" stroke="#50709c" stroke-width="0.8"/><rect x="159.5" y="584.5" width="6.5" height="7" rx="1.5" fill="#8db5e6" stroke="#50709c" stroke-width="0.8"/>
<circle cx="171.8" cy="587.0" r="2.2" fill="#f0f0f0" stroke="#777" stroke-width="0.7"/><circle cx="175.8" cy="591.5" r="2.6" fill="#e8e8e8" stroke="#777" stroke-width="0.7"/><rect x="169.8" y="590.5" width="4" height="4" fill="#5a9ee0"/>
<rect x="183.0" y="584.5" width="10" height="10" rx="2.5" fill="#ececec" stroke="#9a9a9a" stroke-width="0.9"/>
<rect x="196.5" y="584.5" width="10" height="10" rx="2.5" fill="#ececec" stroke="#9a9a9a" stroke-width="0.9"/>
<path d="M209.5 594.5V588.5L214.5 584.5L219.5 588.5V594.5H216.5V590.5H212.5V594.5Z" fill="#e89a58" stroke="#8a6a58" stroke-width="0.8"/>
<rect x="222.3" y="584.5" width="10" height="10" fill="#dfe8f0" stroke="#3f4f66" stroke-width="1.2"/><path d="M224.3 592.5L232.3 584.5" stroke="#f0c020" stroke-width="1.8"/><path d="M223.3 590.5L226.3 588.5" stroke="#5a7fb0" stroke-width="1.5"/>
<circle cx="238.8" cy="587.0" r="2.2" fill="#f0f0f0" stroke="#777" stroke-width="0.7"/><circle cx="242.8" cy="591.5" r="2.6" fill="#e8e8e8" stroke="#777" stroke-width="0.7"/><rect x="236.8" y="590.5" width="4" height="4" fill="#5a9ee0"/>
<path d="M248.8 589.5H258.8M253.8 584.5V594.5" stroke="#3a3a3a" stroke-width="1.3"/><path d="M248.8 589.5l2 -2v4zM258.8 589.5l-2 -2v4zM253.8 584.5l-2 2h4zM253.8 594.5l-2 -2h4z" fill="#3a3a3a"/>
<rect x="261.6" y="585.5" width="6" height="9" rx="2.5" fill="#8fb4e0" stroke="#6d7f99" stroke-width="0.8"/><path d="M269.6 594.5V586.0" stroke="#555" stroke-width="1.1"/>
<rect x="275.1" y="584.5" width="10" height="10" rx="2.5" fill="#c9a040" stroke="#8a6a20" stroke-width="0.9"/>
<path d="M289.5 589.5H299.5M294.5 584.5V594.5" stroke="#3a3a3a" stroke-width="1.3"/><path d="M289.5 589.5l2 -2v4zM299.5 589.5l-2 -2v4zM294.5 584.5l-2 2h4zM294.5 594.5l-2 -2h4z" fill="#3a3a3a"/>
<rect x="301.9" y="584.5" width="10" height="10" fill="#dfe8f0" stroke="#3f4f66" stroke-width="1.2"/><path d="M303.9 592.5L311.9 584.5" stroke="#f0c020" stroke-width="1.8"/><path d="M302.9 590.5L305.9 588.5" stroke="#5a7fb0" stroke-width="1.5"/>
<rect x="314.2" y="584.5" width="5" height="10" rx="2" fill="#8cc070" stroke="#6a7a60" stroke-width="0.7"/><rect x="319.2" y="584.5" width="5" height="10" rx="2" fill="#e09060" stroke="#7a6a60" stroke-width="0.7"/>
<rect x="327.7" y="584.5" width="10" height="10" fill="#dfe8f0" stroke="#3f4f66" stroke-width="1.2"/><path d="M329.7 592.5L337.7 584.5" stroke="#f0c020" stroke-width="1.8"/><path d="M328.7 590.5L331.7 588.5" stroke="#5a7fb0" stroke-width="1.5"/>
<rect x="340.7" y="584.5" width="5" height="10" rx="2" fill="#8cc070" stroke="#6a7a60" stroke-width="0.7"/><rect x="345.7" y="584.5" width="5" height="10" rx="2" fill="#e09060" stroke="#7a6a60" stroke-width="0.7"/>
<rect x="353.5" y="584.5" width="10" height="10" fill="#dfe8f0" stroke="#3f4f66" stroke-width="1.2"/><path d="M355.5 592.5L363.5 584.5" stroke="#f0c020" stroke-width="1.8"/><path d="M354.5 590.5L357.5 588.5" stroke="#5a7fb0" stroke-width="1.5"/>
<rect x="367.0" y="584.5" width="5" height="10" rx="2" fill="#8cc070" stroke="#6a7a60" stroke-width="0.7"/><rect x="372.0" y="584.5" width="5" height="10" rx="2" fill="#e09060" stroke="#7a6a60" stroke-width="0.7"/>
<rect x="380.5" y="584.5" width="10" height="10" fill="#dfe8f0" stroke="#3f4f66" stroke-width="1.2"/><path d="M382.5 592.5L390.5 584.5" stroke="#f0c020" stroke-width="1.8"/><path d="M381.5 590.5L384.5 588.5" stroke="#5a7fb0" stroke-width="1.5"/>
<path d="M394.0 584.5H404.0V589.5Q399.0 595.5 394.0 589.5Z" fill="#6a9ee0" stroke="#4a70a8" stroke-width="0.8"/><path d="M397.0 587.5h4v3l-2 2l-2 -2z" fill="#f0f0f0"/>
<rect x="407.5" y="584.5" width="10" height="10" rx="2.5" fill="#ececec" stroke="#9a9a9a" stroke-width="0.9"/>
<rect x="419.8" y="587.5" width="6.5" height="7" rx="1.5" fill="#7aa5dc" stroke="#50709c" stroke-width="0.8"/><rect x="423.3" y="584.5" width="6.5" height="7" rx="1.5" fill="#8db5e6" stroke="#50709c" stroke-width="0.8"/>
<rect x="433.3" y="584.5" width="10" height="10" rx="2" fill="#5f9ee0" stroke="#3f6ea8" stroke-width="0.8"/><rect x="435.8" y="587.5" width="5" height="5" fill="#f4f4f4"/>
<rect x="446.3" y="584.5" width="10" height="10" rx="2.5" fill="#ececec" stroke="#9a9a9a" stroke-width="0.9"/>
<rect x="459.2" y="587.5" width="6.5" height="7" rx="1.5" fill="#7aa5dc" stroke="#50709c" stroke-width="0.8"/><rect x="462.7" y="584.5" width="6.5" height="7" rx="1.5" fill="#8db5e6" stroke="#50709c" stroke-width="0.8"/>
<rect x="472.6" y="584.5" width="10" height="10" rx="2.5" fill="#8ab6e6" stroke="#6f8fb0" stroke-width="0.8"/><path d="M472.6 590.5q2.5 -3 5 0t5 0" stroke="#d04848" stroke-width="1.1" fill="none"/>
<circle cx="492.7" cy="589.5" r="3" fill="#7fb0e6" stroke="#5a80b0" stroke-width="0.7"/><path d="M485.7 589.5H489.7" stroke="#222" stroke-width="1.6"/>
<rect x="498.5" y="585.5" width="6" height="9" rx="2.5" fill="#8fb4e0" stroke="#6d7f99" stroke-width="0.8"/><path d="M506.5 594.5V586.0" stroke="#555" stroke-width="1.1"/>
<path d="M511.7 594.5V588.5L516.7 584.5L521.7 588.5V594.5H518.7V590.5H514.7V594.5Z" fill="#e89a58" stroke="#8a6a58" stroke-width="0.8"/>
<rect x="525.2" y="585.5" width="6" height="9" rx="2.5" fill="#8fb4e0" stroke="#6d7f99" stroke-width="0.8"/><path d="M533.2 594.5V586.0" stroke="#555" stroke-width="1.1"/>
<path d="M538.3 589.5H548.3M543.3 584.5V594.5" stroke="#3a3a3a" stroke-width="1.3"/><path d="M538.3 589.5l2 -2v4zM548.3 589.5l-2 -2v4zM543.3 584.5l-2 2h4zM543.3 594.5l-2 -2h4z" fill="#3a3a3a"/>
<rect x="551.0" y="587.5" width="6.5" height="7" rx="1.5" fill="#7aa5dc" stroke="#50709c" stroke-width="0.8"/><rect x="554.5" y="584.5" width="6.5" height="7" rx="1.5" fill="#8db5e6" stroke="#50709c" stroke-width="0.8"/>
<rect x="564.5" y="584.5" width="10" height="10" fill="#dfe8f0" stroke="#3f4f66" stroke-width="1.2"/><path d="M566.5 592.5L574.5 584.5" stroke="#f0c020" stroke-width="1.8"/><path d="M565.5 590.5L568.5 588.5" stroke="#5a7fb0" stroke-width="1.5"/>
<rect x="577.4" y="585.5" width="6" height="9" rx="2.5" fill="#8fb4e0" stroke="#6d7f99" stroke-width="0.8"/><path d="M585.4 594.5V586.0" stroke="#555" stroke-width="1.1"/>
<rect x="590.8" y="584.5" width="10" height="10" rx="2" fill="#5f9ee0" stroke="#3f6ea8" stroke-width="0.8"/><rect x="593.3" y="587.5" width="5" height="5" fill="#f4f4f4"/>
<rect x="603.9" y="585.5" width="6" height="9" rx="2.5" fill="#8fb4e0" stroke="#6d7f99" stroke-width="0.8"/><path d="M611.9 594.5V586.0" stroke="#555" stroke-width="1.1"/>
<rect x="619.4" y="587.5" width="8" height="7" rx="2" fill="#6aa6e4" stroke="#4a78b0" stroke-width="0.8"/><path d="M617.4 584.5l4 4M621.4 584.5l-4 4" stroke="#e03030" stroke-width="1.2"/>
<rect x="630.4" y="584.5" width="10" height="10" rx="2" fill="#5f9ee0" stroke="#3f6ea8" stroke-width="0.8"/><rect x="632.9" y="587.5" width="5" height="5" fill="#f4f4f4"/>
<path d="M643.9 589.5H653.9M648.9 584.5V594.5" stroke="#3a3a3a" stroke-width="1.3"/><path d="M643.9 589.5l2 -2v4zM653.9 589.5l-2 -2v4zM648.9 584.5l-2 2h4zM648.9 594.5l-2 -2h4z" fill="#3a3a3a"/>
<rect x="656.7" y="584.5" width="10" height="10" fill="#dfe8f0" stroke="#3f4f66" stroke-width="1.2"/><path d="M658.7 592.5L666.7 584.5" stroke="#f0c020" stroke-width="1.8"/><path d="M657.7 590.5L660.7 588.5" stroke="#5a7fb0" stroke-width="1.5"/>
<rect x="670.2" y="585.5" width="6" height="9" rx="2.5" fill="#8fb4e0" stroke="#6d7f99" stroke-width="0.8"/><path d="M678.2 594.5V586.0" stroke="#555" stroke-width="1.1"/>
<rect x="683.7" y="585.5" width="6" height="9" rx="2.5" fill="#8fb4e0" stroke="#6d7f99" stroke-width="0.8"/><path d="M691.7 594.5V586.0" stroke="#555" stroke-width="1.1"/>
<circle cx="700.1" cy="587.5" r="2.5" fill="#f0f0f0" stroke="#777" stroke-width="0.7"/><circle cx="704.1" cy="591.5" r="2.8" fill="#f0f0f0" stroke="#777" stroke-width="0.7"/><path d="M697.1 589.5Q699.1 594.5 702.1 593.5" stroke="#d04040" stroke-width="1" fill="none"/>
<rect x="709.5" y="584.5" width="5" height="10" rx="2" fill="#8cc070" stroke="#6a7a60" stroke-width="0.7"/><rect x="714.5" y="584.5" width="5" height="10" rx="2" fill="#e09060" stroke="#7a6a60" stroke-width="0.7"/>
<circle cx="726.0" cy="587.0" r="2.2" fill="#f0f0f0" stroke="#777" stroke-width="0.7"/><circle cx="730.0" cy="591.5" r="2.6" fill="#e8e8e8" stroke="#777" stroke-width="0.7"/><rect x="724.0" y="590.5" width="4" height="4" fill="#5a9ee0"/>
<rect x="738.2" y="587.5" width="8" height="7" rx="2" fill="#6aa6e4" stroke="#4a78b0" stroke-width="0.8"/><path d="M736.2 584.5l4 4M740.2 584.5l-4 4" stroke="#e03030" stroke-width="1.2"/>
<rect x="751.7" y="587.5" width="8" height="7" rx="2" fill="#6aa6e4" stroke="#4a78b0" stroke-width="0.8"/><path d="M749.7 584.5l4 4M753.7 584.5l-4 4" stroke="#e03030" stroke-width="1.2"/>
<rect x="762.0" y="584.5" width="10" height="10" rx="2.5" fill="#8ab6e6" stroke="#6f8fb0" stroke-width="0.8"/><path d="M762.0 590.5q2.5 -3 5 0t5 0" stroke="#d04848" stroke-width="1.1" fill="none"/>
<rect x="775.6" y="584.5" width="10" height="10" fill="#dfe8f0" stroke="#3f4f66" stroke-width="1.2"/><path d="M777.6 592.5L785.6 584.5" stroke="#f0c020" stroke-width="1.8"/><path d="M776.6 590.5L779.6 588.5" stroke="#5a7fb0" stroke-width="1.5"/>
<rect x="788.4" y="585.5" width="6" height="9" rx="2.5" fill="#8fb4e0" stroke="#6d7f99" stroke-width="0.8"/><path d="M796.4 594.5V586.0" stroke="#555" stroke-width="1.1"/>
<path d="M801.4 594.5V587.5L804.4 584.5H809.4Q811.4 586.5 811.4 589.5V594.5Z" fill="#e6e6e6" stroke="#8a8a8a" stroke-width="0.9"/><path d="M806.4 585.5Q810.4 586.5 810.4 590.5" stroke="#5a88c8" stroke-width="1.4" fill="none"/>
<rect x="814.9" y="584.5" width="10" height="10" fill="#dfe8f0" stroke="#3f4f66" stroke-width="1.2"/><path d="M816.9 592.5L824.9 584.5" stroke="#f0c020" stroke-width="1.8"/><path d="M815.9 590.5L818.9 588.5" stroke="#5a7fb0" stroke-width="1.5"/>
<rect x="827.2" y="584.5" width="10" height="10" rx="3.5" fill="#f0b898" stroke="#b88a70" stroke-width="0.9"/><circle cx="831.2" cy="590.5" r="2.5" fill="#f4f0ec" stroke="#777" stroke-width="0.6"/>
<rect x="840.7" y="584.5" width="10" height="10" rx="2.5" fill="#8ab6e6" stroke="#6f8fb0" stroke-width="0.8"/><path d="M840.7 590.5q2.5 -3 5 0t5 0" stroke="#d04848" stroke-width="1.1" fill="none"/>
<path d="M854.2 594.5V587.5L857.2 584.5H862.2Q864.2 586.5 864.2 589.5V594.5Z" fill="#e6e6e6" stroke="#8a8a8a" stroke-width="0.9"/><path d="M859.2 585.5Q863.2 586.5 863.2 590.5" stroke="#5a88c8" stroke-width="1.4" fill="none"/>
<rect x="867.7" y="584.5" width="10" height="10" fill="#dfe8f0" stroke="#3f4f66" stroke-width="1.2"/><path d="M869.7 592.5L877.7 584.5" stroke="#f0c020" stroke-width="1.8"/><path d="M868.7 590.5L871.7 588.5" stroke="#5a7fb0" stroke-width="1.5"/>
<rect x="880.0" y="585.5" width="6" height="9" rx="2.5" fill="#8fb4e0" stroke="#6d7f99" stroke-width="0.8"/><path d="M888.0 594.5V586.0" stroke="#555" stroke-width="1.1"/>
<rect x="893.5" y="584.5" width="10" height="10" fill="#dfe8f0" stroke="#3f4f66" stroke-width="1.2"/><path d="M895.5 592.5L903.5 584.5" stroke="#f0c020" stroke-width="1.8"/><path d="M894.5 590.5L897.5 588.5" stroke="#5a7fb0" stroke-width="1.5"/>
<rect x="906.6" y="584.5" width="10" height="10" rx="3.5" fill="#f0b898" stroke="#b88a70" stroke-width="0.9"/><circle cx="910.6" cy="590.5" r="2.5" fill="#f4f0ec" stroke="#777" stroke-width="0.6"/>
<rect x="919.6" y="584.5" width="10" height="10" rx="2.5" fill="#8ab6e6" stroke="#6f8fb0" stroke-width="0.8"/><path d="M919.6 590.5q2.5 -3 5 0t5 0" stroke="#d04848" stroke-width="1.1" fill="none"/>
<circle cx="940.0" cy="589.5" r="3" fill="#7fb0e6" stroke="#5a80b0" stroke-width="0.7"/><path d="M933.0 589.5H937.0" stroke="#222" stroke-width="1.6"/>
<path d="M946.4 594.5V587.5L949.4 584.5H954.4Q956.4 586.5 956.4 589.5V594.5Z" fill="#e6e6e6" stroke="#8a8a8a" stroke-width="0.9"/><path d="M951.4 585.5Q955.4 586.5 955.4 590.5" stroke="#5a88c8" stroke-width="1.4" fill="none"/>
<path d="M959.8 594.5V587.5L962.8 584.5H967.8Q969.8 586.5 969.8 589.5V594.5Z" fill="#e6e6e6" stroke="#8a8a8a" stroke-width="0.9"/><path d="M964.8 585.5Q968.8 586.5 968.8 590.5" stroke="#5a88c8" stroke-width="1.4" fill="none"/>
<path d="M973.0 589.5H983.0M978.0 584.5V594.5" stroke="#3a3a3a" stroke-width="1.3"/><path d="M973.0 589.5l2 -2v4zM983.0 589.5l-2 -2v4zM978.0 584.5l-2 2h4zM978.0 594.5l-2 -2h4z" fill="#3a3a3a"/>
<path d="M985.8 589.5H995.8M990.8 584.5V594.5" stroke="#3a3a3a" stroke-width="1.3"/><path d="M985.8 589.5l2 -2v4zM995.8 589.5l-2 -2v4zM990.8 584.5l-2 2h4zM990.8 594.5l-2 -2h4z" fill="#3a3a3a"/>
<path d="M993 581.5H1002L999 585.5H996Z" fill="#555"/><path d="M997.5 585V599" stroke="#555" stroke-width="1.2"/>
<circle cx="1019.2" cy="589.8" r="3.2" fill="none" stroke="#555" stroke-width="2.2"/>
<circle cx="1019.2" cy="589.8" r="5" fill="none" stroke="#555" stroke-width="1.8" stroke-dasharray="1.8 1.8"/>
</g>
</svg>
</body></html>
